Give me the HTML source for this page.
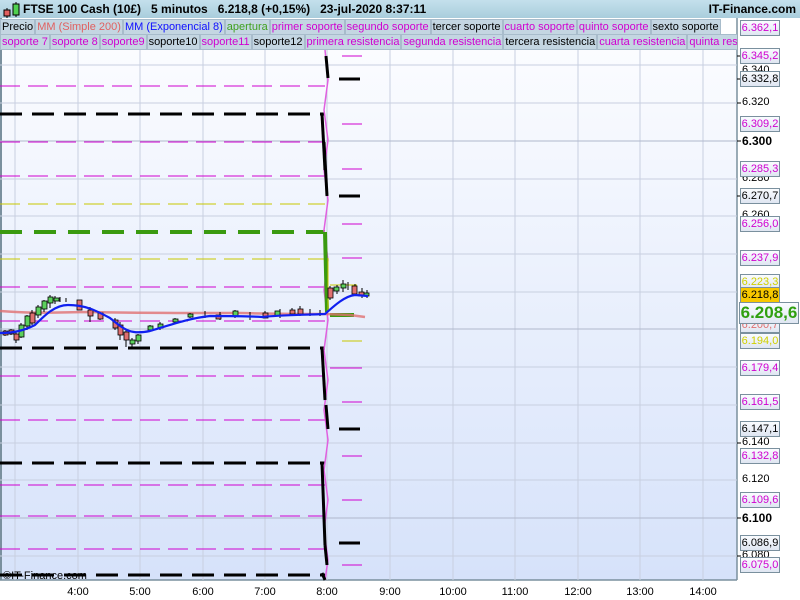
<!DOCTYPE html>
<html><head><meta charset="utf-8"><style>
*{margin:0;padding:0}
body{width:800px;height:600px;overflow:hidden;background:#fff;font-family:"Liberation Sans",sans-serif;position:relative}
#hdr{position:absolute;left:0;top:0;width:800px;height:18px;background:linear-gradient(#c4e0ec,#a9cddc);font-size:12px;font-weight:bold;line-height:18px}
.leg{position:absolute;left:0;height:16px;font-size:11px;line-height:15px;white-space:nowrap;display:flex}
.leg span{background:#c4d6e2;border:1px solid #a8bccb;padding:0 1px;margin-right:0}
.lb{position:absolute;left:740px;width:38px;height:14px;border:1px solid #7a909e;background:linear-gradient(#fafcff,#dfe6f2);font-size:11px;line-height:14px;text-align:center}
.tk{position:absolute;left:742px;font-size:11px;color:#000}
.tl{position:absolute;top:586px;font-size:11px;transform:translateX(-50%)}
</style></head><body>
<svg width="800" height="600" style="position:absolute;left:0;top:0">
<defs><linearGradient id="bg" x1="0" y1="0" x2="0" y2="1"><stop offset="0" stop-color="#fbfcff"/><stop offset="1" stop-color="#d6e2fa"/></linearGradient></defs>
<rect x="0" y="50" width="737" height="530" fill="url(#bg)"/>
<line x1="1" y1="18" x2="1" y2="580" stroke="#7a909e" stroke-width="2"/>
<line x1="737" y1="18" x2="737" y2="580" stroke="#7a909e" stroke-width="1.5"/>
<line x1="0" y1="580" x2="737" y2="580" stroke="#7a909e" stroke-width="1.5"/>
<g stroke="#c8cfe0" stroke-width="1">
<line x1="15" y1="50" x2="15" y2="580"/><line x1="78" y1="50" x2="78" y2="580"/><line x1="140" y1="50" x2="140" y2="580"/><line x1="203" y1="50" x2="203" y2="580"/><line x1="265" y1="50" x2="265" y2="580"/><line x1="327" y1="50" x2="327" y2="580"/><line x1="390" y1="50" x2="390" y2="580"/><line x1="453" y1="50" x2="453" y2="580"/><line x1="515" y1="50" x2="515" y2="580"/><line x1="578" y1="50" x2="578" y2="580"/><line x1="640" y1="50" x2="640" y2="580"/><line x1="703" y1="50" x2="703" y2="580"/>
<line x1="0" y1="65" x2="737" y2="65"/><line x1="0" y1="103" x2="737" y2="103"/><line x1="0" y1="179" x2="737" y2="179"/><line x1="0" y1="216" x2="737" y2="216"/><line x1="0" y1="254" x2="737" y2="254"/><line x1="0" y1="292" x2="737" y2="292"/><line x1="0" y1="367" x2="737" y2="367"/><line x1="0" y1="405" x2="737" y2="405"/><line x1="0" y1="443" x2="737" y2="443"/><line x1="0" y1="480" x2="737" y2="480"/><line x1="0" y1="556" x2="737" y2="556"/>
</g>
<g stroke="#b0b8cc"><line x1="0" y1="141" x2="737" y2="141"/><line x1="0" y1="329" x2="737" y2="329"/><line x1="0" y1="518" x2="737" y2="518"/></g>
<g stroke="#d000d0" stroke-width="1" stroke-dasharray="20,8">
<line x1="0" y1="86" x2="325" y2="86"/><line x1="0" y1="142" x2="325" y2="142"/><line x1="0" y1="176" x2="325" y2="176"/><line x1="0" y1="287" x2="325" y2="287"/><line x1="0" y1="321" x2="325" y2="321"/><line x1="0" y1="376" x2="325" y2="376"/><line x1="0" y1="420" x2="325" y2="420"/><line x1="0" y1="485" x2="325" y2="485"/><line x1="0" y1="516" x2="325" y2="516"/><line x1="0" y1="549" x2="325" y2="549"/>
</g>
<g stroke="#c8c800" stroke-width="1" stroke-dasharray="20,8"><line x1="0" y1="204" x2="325" y2="204"/><line x1="0" y1="259" x2="325" y2="259"/></g>
<g stroke="#000" stroke-width="3" stroke-dasharray="22,10"><line x1="0" y1="114" x2="325" y2="114"/><line x1="0" y1="348" x2="325" y2="348"/><line x1="0" y1="463" x2="325" y2="463"/><line x1="0" y1="575" x2="325" y2="575"/></g>
<line x1="0" y1="232" x2="325" y2="232" stroke="#3a9a10" stroke-width="4" stroke-dasharray="22,12"/>
<path d="M325,50 L328,80 L324,110 L328,140 L324,170 L328,200 L324,230 L328,260 L324,290 L328,320 L324,350 L328,380 L324,410 L328,440 L324,470 L328,500 L324,530 L328,560 L325,580" stroke="#e060e0" stroke-width="1.5" fill="none"/>
<g stroke="#000" stroke-width="3"><line x1="326" y1="56" x2="328" y2="78"/><line x1="322" y1="114" x2="325" y2="170"/><line x1="324" y1="142" x2="327" y2="196"/><line x1="322" y1="348" x2="325" y2="400"/><line x1="326" y1="405" x2="328" y2="429"/><line x1="322" y1="463" x2="325" y2="545"/><line x1="325" y1="545" x2="327" y2="565"/><line x1="322" y1="573" x2="325" y2="580"/></g>
<line x1="325" y1="232" x2="327" y2="312" stroke="#3a9a10" stroke-width="4"/>
<line x1="328" y1="258" x2="328" y2="312" stroke="#c8c800" stroke-width="1"/>
<line x1="330" y1="315" x2="354" y2="315" stroke="#3a9a10" stroke-width="4"/>
<g stroke="#d000d0"><line x1="342" y1="56" x2="362" y2="56"/><line x1="342" y1="124" x2="362" y2="124"/><line x1="342" y1="169" x2="362" y2="169"/><line x1="342" y1="224" x2="362" y2="224"/><line x1="342" y1="258" x2="362" y2="258"/><line x1="330" y1="368" x2="362" y2="368"/><line x1="342" y1="402" x2="362" y2="402"/><line x1="342" y1="456" x2="362" y2="456"/><line x1="342" y1="500" x2="362" y2="500"/><line x1="342" y1="565" x2="362" y2="565"/></g>
<g stroke="#c8c800"><line x1="330" y1="285" x2="357" y2="285"/><line x1="342" y1="341" x2="362" y2="341"/></g>
<g stroke="#000" stroke-width="3"><line x1="339" y1="79" x2="360" y2="79"/><line x1="339" y1="196" x2="360" y2="196"/><line x1="339" y1="429" x2="360" y2="429"/><line x1="339" y1="543" x2="360" y2="543"/></g>
<path d="M0,311 C40,314 60,312 90,312 C130,313 200,313 240,313 C280,314 310,314 325,314 L350,315 L365,317" stroke="#e07070" stroke-width="2.5" fill="none" opacity=".8"/>
<g stroke="#000" stroke-width="1">
<path d="M5,330V336M11,329V335M16,331V343M21,323V338M27,315V330M32,310V325M38,305V318M44,300V312M50,295V308M55,296V304M60,297V302M66,298V302M90,307V322M100,312V320M115,318V330M120,322V340M126,330V347M132,338V348M138,334V344M150,325V332M160,322V330M175,318V324M190,313V318M205,311V318M220,312V320M235,310V318M250,312V320M265,311V318M280,309V318M292,308V316M300,306V316M310,309V316M320,310V316M330,286V300M337,285V294M343,280V292M348,282V290M355,284V296M362,288V298M367,290V298"/>
</g>
<g stroke="#000" stroke-width=".8">
<rect x="3" y="331" width="5" height="4" fill="#e07070"/><rect x="9" y="330" width="5" height="4" fill="#e07070"/><rect x="14" y="334" width="5" height="6" fill="#e07070"/><rect x="19" y="325" width="5" height="12" fill="#5cd05c"/><rect x="25" y="316" width="5" height="10" fill="#5cd05c"/><rect x="30" y="313" width="5" height="10" fill="#e07070"/><rect x="36" y="307" width="5" height="8" fill="#5cd05c"/><rect x="42" y="301" width="5" height="8" fill="#5cd05c"/><rect x="48" y="297" width="5" height="6" fill="#5cd05c"/><rect x="54" y="298" width="5" height="3" fill="#5cd05c"/>
<rect x="77" y="300" width="5" height="10" fill="#e07070"/><rect x="88" y="310" width="5" height="6" fill="#e07070"/><rect x="98" y="313" width="5" height="6" fill="#e07070"/><rect x="113" y="320" width="5" height="8" fill="#e07070"/><rect x="118" y="325" width="5" height="10" fill="#e07070"/><rect x="124" y="332" width="5" height="8" fill="#e07070"/><rect x="130" y="340" width="5" height="4" fill="#5cd05c"/><rect x="136" y="335" width="5" height="6" fill="#5cd05c"/><rect x="148" y="326" width="5" height="4" fill="#5cd05c"/><rect x="158" y="324" width="5" height="4" fill="#5cd05c"/><rect x="173" y="319" width="5" height="3" fill="#5cd05c"/><rect x="188" y="314" width="5" height="3" fill="#5cd05c"/><rect x="216" y="315" width="5" height="4" fill="#e07070"/><rect x="233" y="311" width="5" height="5" fill="#5cd05c"/><rect x="263" y="313" width="5" height="5" fill="#e07070"/><rect x="275" y="311" width="5" height="5" fill="#5cd05c"/><rect x="290" y="310" width="5" height="4" fill="#e07070"/><rect x="298" y="309" width="5" height="5" fill="#e07070"/>
<rect x="328" y="288" width="5" height="10" fill="#e07070"/><rect x="334" y="287" width="5" height="4" fill="#5cd05c"/><rect x="341" y="284" width="5" height="4" fill="#5cd05c"/><rect x="352" y="286" width="5" height="8" fill="#e07070"/><rect x="359" y="292" width="5" height="4" fill="#e07070"/><rect x="364" y="293" width="5" height="3" fill="#5cd05c"/>
</g>
<path d="M0,333 C15,333 25,330 35,325 C45,315 55,305 68,305 C85,305 95,310 110,318 C125,330 130,335 150,331 C170,325 190,318 210,316 C230,316 245,316 262,317 C280,315 300,315 325,314 C335,305 345,296 355,295 L368,296" stroke="#1020f0" stroke-width="2.2" fill="none"/>
<g stroke="#000"><line x1="737" y1="56" x2="741" y2="56"/><line x1="737" y1="79" x2="741" y2="79"/><line x1="737" y1="103" x2="741" y2="103"/><line x1="737" y1="141" x2="741" y2="141"/><line x1="737" y1="196" x2="741" y2="196"/><line x1="737" y1="443" x2="741" y2="443"/><line x1="737" y1="518" x2="741" y2="518"/><line x1="737" y1="556" x2="741" y2="556"/></g>
<text x="3" y="579" font-size="11" font-family="Liberation Sans" fill="#000">©IT-Finance.com</text>
</svg>
<div id="hdr"><svg width="20" height="18" style="position:absolute;left:2px;top:0"><line x1="5" y1="8" x2="5" y2="18" stroke="#000"/><rect x="2" y="10" width="6" height="6" fill="#e06060" stroke="#000"/><line x1="14" y1="2" x2="14" y2="17" stroke="#000"/><rect x="11" y="4" width="6" height="11" fill="#50d050" stroke="#000"/></svg><span style="position:absolute;left:23px">FTSE 100 Cash (10£)&nbsp;&nbsp;&nbsp;5 minutos&nbsp;&nbsp;&nbsp;6.218,8 (+0,15%)&nbsp;&nbsp;&nbsp;23-jul-2020 8:37:11</span><span style="position:absolute;right:4px">IT-Finance.com</span></div>
<div class="leg" style="top:19px"><span>Precio</span><span style="color:#e06060">MM (Simple 200)</span><span style="color:#1010ff">MM (Exponencial 8)</span><span style="color:#40a020">apertura</span><span style="color:#d000d0">primer soporte</span><span style="color:#d000d0">segundo soporte</span><span>tercer soporte</span><span style="color:#d000d0">cuarto soporte</span><span style="color:#d000d0">quinto soporte</span><span>sexto soporte</span></div>
<div class="leg" style="top:34px;width:737px;overflow:hidden"><span style="color:#d000d0">soporte 7</span><span style="color:#d000d0">soporte 8</span><span style="color:#d000d0">soporte9</span><span>soporte10</span><span style="color:#d000d0">soporte11</span><span>soporte12</span><span style="color:#d000d0">primera resistencia</span><span style="color:#d000d0">segunda resistencia</span><span>tercera resistencia</span><span style="color:#d000d0">cuarta resistencia</span><span style="color:#d000d0">quinta resistencia</span></div>
<div class="tk" style="top:64px">6.340</div><div class="tk" style="top:96px">6.320</div><div class="tk" style="top:134px;font-weight:bold;font-size:12px">6.300</div><div class="tk" style="top:172px">6.280</div><div class="tk" style="top:209px">6.260</div><div class="tk" style="top:436px">6.140</div><div class="tk" style="top:473px">6.120</div><div class="tk" style="top:511px;font-weight:bold;font-size:12px">6.100</div><div class="tk" style="top:549px">6.080</div>
<div class="lb" style="top:20px;color:#d000d0">6.362,1</div>
<div class="lb" style="top:48px;color:#d000d0">6.345,2</div>
<div class="lb" style="top:71px">6.332,8</div>
<div class="lb" style="top:116px;color:#d000d0">6.309,2</div>
<div class="lb" style="top:161px;color:#d000d0">6.285,3</div>
<div class="lb" style="top:188px">6.270,7</div>
<div class="lb" style="top:216px;color:#d000d0">6.256,0</div>
<div class="lb" style="top:250px;color:#d000d0">6.237,9</div>
<div class="lb" style="top:274px;color:#d0d000">6.223,3</div>
<div class="lb" style="top:317px;color:#e07070">6.200,7</div>
<div class="lb" style="top:287px;background:#f8c800">6.218,8</div>
<div class="lb" style="top:302px;left:739px;width:58px;height:20px;font-size:17px;line-height:20px;font-weight:bold;color:#30a010">6.208,6</div>
<div class="lb" style="top:333px;color:#d0d000">6.194,0</div>
<div class="lb" style="top:360px;color:#d000d0">6.179,4</div>
<div class="lb" style="top:394px;color:#d000d0">6.161,5</div>
<div class="lb" style="top:421px">6.147,1</div>
<div class="lb" style="top:448px;color:#d000d0">6.132,8</div>
<div class="lb" style="top:492px;color:#d000d0">6.109,6</div>
<div class="lb" style="top:535px">6.086,9</div>
<div class="lb" style="top:557px;color:#d000d0">6.075,0</div>
<div class="tl" style="left:78px">4:00</div><div class="tl" style="left:140px">5:00</div><div class="tl" style="left:203px">6:00</div><div class="tl" style="left:265px">7:00</div><div class="tl" style="left:327px">8:00</div><div class="tl" style="left:390px">9:00</div><div class="tl" style="left:453px">10:00</div><div class="tl" style="left:515px">11:00</div><div class="tl" style="left:578px">12:00</div><div class="tl" style="left:640px">13:00</div><div class="tl" style="left:703px">14:00</div>
</body></html>
